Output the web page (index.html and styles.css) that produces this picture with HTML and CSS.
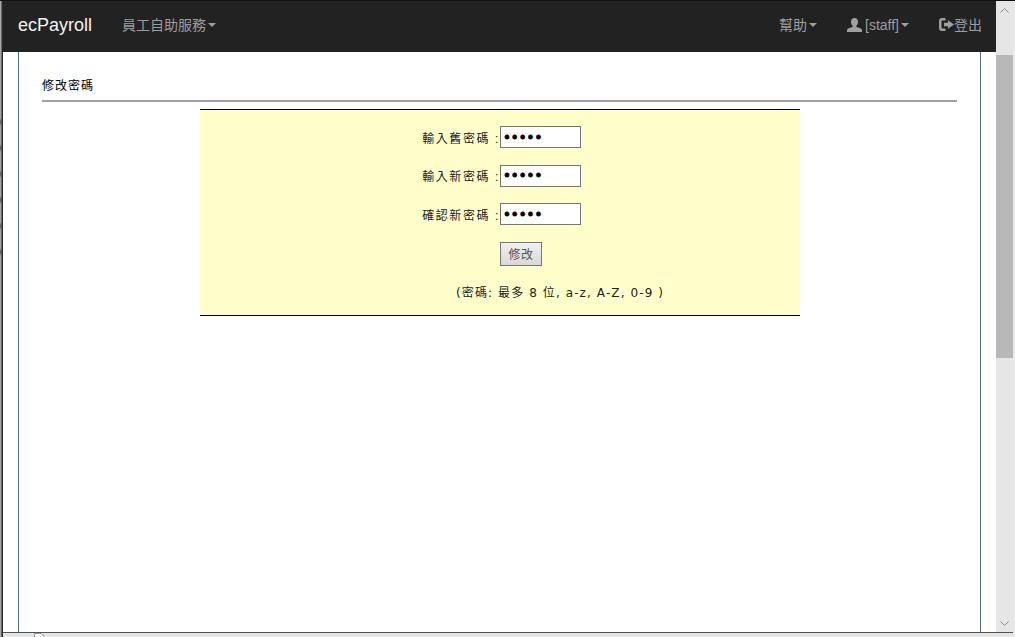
FILE: index.html
```html
<!DOCTYPE html>
<html lang="zh-Hant">
<head>
<meta charset="utf-8">
<title>ecPayroll</title>
<link rel="stylesheet" href="styles.css">
</head>
<body>
<div class="window">
  <div class="body-row">
    <div class="page">
      <nav class="navbar">
        <a class="brand">ecPayroll</a>
        <a class="nav-link nav-service">員工自助服務<span class="caret"></span></a>
        <div class="nav-right">
          <a class="nav-link">幫助<span class="caret"></span></a>
          <a class="nav-link"><svg class="icon-user" viewBox="0 0 15 14"><path d="M7.500 0C9.700 0 11 1.500 11 3.800c0 1.700-.7 3.200-1.600 4v1.300c1.900.6 4.900 1.200 5.600 2.600V14H0v-2.300c.7-1.400 3.700-2 5.600-2.600V7.800C4.700 7 4 5.500 4 3.800 4 1.500 5.300 0 7.500 0z"/></svg>[staff]<span class="caret"></span></a>
          <a class="nav-link"><svg class="icon-out" viewBox="0 0 15 13"><path d="M6.500 0H3C1.200 0 0 1.200 0 3v7c0 1.800 1.200 3 3 3h3.500v-2.400H3.400c-.6 0-.9-.3-.9-.9V3.300c0-.6.300-.9.900-.9h3.100z"/><path d="M9 2.300 15 6.500l-6 4.200V8.300H5V4.700h4z"/></svg>登出</a>
        </div>
      </nav>
      <main class="content">
        <div class="sheet">
          <h1 class="title">修改密碼</h1>
          <form class="panel">
            <div class="field"><label class="field-label">輸入舊密碼 :</label><input class="field-input" type="password" value="12345"></div>
            <div class="field"><label class="field-label">輸入新密碼 :</label><input class="field-input" type="password" value="12345"></div>
            <div class="field"><label class="field-label">確認新密碼 :</label><input class="field-input" type="password" value="12345"></div>
            <div class="field field-action"><span class="field-label"></span><button class="submit" type="button">修改</button></div>
            <p class="hint">(密碼: 最多 8 位, a-z, A-Z, 0-9 )</p>
          </form>
        </div>
      </main>
    </div>
    <div class="scrollbar">
      <div class="scroll-head"><svg class="arrow" viewBox="0 0 9 5"><path d="M.5 4.500 4.500 .5l4 4"/></svg></div>
      <div class="thumb"></div>
      <div class="track"></div>
      <svg class="arrow arrow-down" viewBox="0 0 9 5"><path d="M.5 .5l4 4 4-4"/></svg>
    </div>
  </div>
  <div class="status"><svg class="status-icon" viewBox="0 0 12 5"><path d="M.5 5V.5h8l3 3V5"/></svg></div>
</div>
</body>
</html>
```

FILE: styles.css
```css
* { box-sizing: border-box; }
html, body { margin: 0; height: 100%; overflow: hidden; background: #fff; }
body { font-family: "Liberation Sans", Arial, "Noto Sans CJK TC", sans-serif; }

.window {
  width: 1015px;
  height: 637px;
  display: flex;
  flex-direction: column;
  padding: 1px 2px 0 3px;
  background:
    repeating-linear-gradient(#5550 0 18px, #555 22px, #5550 26px) 0 100px / 2px 156px no-repeat,
    linear-gradient(to right, #a8a8a8 1px, #666 1px, #666 2px, #2a2a2a 2px, #2a2a2a 3px, #e9e9e9 3px);
  box-shadow: inset 0 1px 0 #111;
}
.body-row { flex: 1; display: flex; min-height: 0; }
.page { flex: 1; display: flex; flex-direction: column; min-width: 0; background: #fff; }

.navbar {
  height: 51px;
  flex: none;
  background: #222;
  display: flex;
  align-items: center;
  padding: 0 0 4px 15px;
  color: #9d9d9d;
  font-size: 14px;
  line-height: 20px;
}
.brand { color: #f2f2f2; font-size: 18px; width: 104px; }
.nav-link { display: flex; align-items: center; color: #9d9d9d; white-space: pre; }
.nav-right { margin-left: auto; display: flex; align-items: center; gap: 30px; padding-right: 14px; }
.caret {
  width: 0; height: 0; margin-left: 2px;
  border-top: 4px solid #9d9d9d;
  border-left: 4px solid transparent;
  border-right: 4px solid transparent;
}
.icon-user { width: 15px; height: 14px; fill: #a0a0a0; margin-right: 3px; }
.icon-out { width: 15px; height: 13px; fill: #a0a0a0; }

.content { flex: 1; padding: 0 15px; min-height: 0; }
.sheet {
  height: 100%;
  border-left: 1px solid #4d7391;
  border-right: 1px solid #4d7391;
  padding: 0 23px;
}
.title {
  margin: 0;
  padding-top: 27px;
  height: 50px;
  font-size: 12px;
  line-height: 14px;
  font-weight: 400;
  color: #000;
  border-bottom: 2px solid #a0a0a0;
  letter-spacing: 1px;
}
.panel {
  width: 600px;
  height: 207px;
  margin: 7px 0 0 158px;
  background: #ffffcc;
  border-top: 1px solid #000;
  border-bottom: 1px solid #000;
  padding-top: 16px;
  font-size: 12px;
  color: #222;
}
.field { display: flex; height: 22px; margin-bottom: 16.500px; align-items: center; }
.field-label { width: 300px; text-align: right; letter-spacing: 1.600px; white-space: pre; }
.field-input {
  width: 81px; height: 22px; margin: 0; padding: 1px 2px;
  border: 1px solid #767676; background: #fff;
  font-size: 13.333px; font-family: "DejaVu Sans", sans-serif;
  -webkit-text-stroke: .9px #000;
}
.field-action { height: 24px; margin-bottom: 20px; }
.submit {
  width: 42px; height: 24px; padding: 0; margin: 0;
  border: 1px solid #767676;
  background: linear-gradient(#f0f0f0, #d8d8d8);
  color: #555; font-size: 12px;
  font-family: "Liberation Sans", Arial, "Noto Sans CJK TC", sans-serif;
  letter-spacing: .5px;
}
.hint { margin: 0 0 0 256px; font-family: "DejaVu Sans", "Noto Sans CJK TC", sans-serif; font-size: 12px; line-height: 14px; white-space: pre; color: #222; letter-spacing: 1.100px; }

.scrollbar {
  width: 17px; flex: none; background: #e6e6e6;
  display: flex; flex-direction: column; align-items: center;
}
.scroll-head { height: 54px; flex: none; display: flex; justify-content: center; align-items: flex-start; padding-top: 7px; }
.arrow { width: 9px; height: 5px; flex: none; fill: none; stroke: #8a8a8a; stroke-width: 1; }
.arrow-down { margin-bottom: 6px; }
.thumb { width: 100%; height: 303px; flex: none; background: #b8b8b8; }
.track { flex: 1; }
.status { height: 5px; flex: none; background: #e4e4e4; border-top: 1px solid #555; padding-left: 30px; display: flex; }
.status-icon { width: 12px; height: 4px; fill: #fff; stroke: #777; stroke-width: 1; }
```
